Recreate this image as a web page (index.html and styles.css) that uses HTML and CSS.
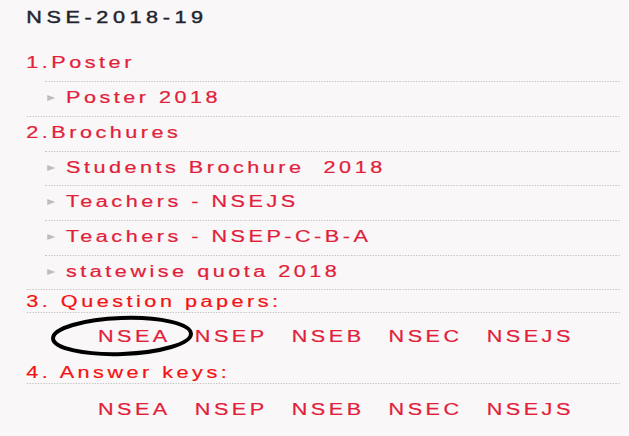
FILE: index.html
```html
<!DOCTYPE html>
<html lang="en">
<head>
<meta charset="utf-8">
<title>NSE-2018-19</title>
<link rel="stylesheet" href="styles.css">
</head>
<body>
<div class="page">
  <div class="panel">
    <h3 class="title">NSE-2018-19</h3>
    <ul class="sections">
      <li class="section">
        <a class="section-head" href="#">1.Poster</a>
        <ul class="sublist">
          <li class="subitem"><a class="link" href="#">Poster 2018</a></li>
        </ul>
      </li>
      <li class="section">
        <a class="section-head" href="#">2.Brochures</a>
        <ul class="sublist">
          <li class="subitem"><a class="link" href="#">Students Brochure&nbsp; 2018</a></li>
          <li class="subitem"><a class="link" href="#">Teachers - NSEJS</a></li>
          <li class="subitem"><a class="link" href="#">Teachers - NSEP-C-B-A</a></li>
          <li class="subitem"><a class="link" href="#">statewise quota 2018</a></li>
        </ul>
      </li>
    </ul>
    <div class="group-head">3. Question papers:</div>
    <div class="codes">
      <a class="link" href="#">NSEA</a>
      <a class="link" href="#">NSEP</a>
      <a class="link" href="#">NSEB</a>
      <a class="link" href="#">NSEC</a>
      <a class="link" href="#">NSEJS</a>
    </div>
    <div class="group-head">4. Answer keys:</div>
    <div class="codes codes-answers">
      <a class="link" href="#">NSEA</a>
      <a class="link" href="#">NSEP</a>
      <a class="link" href="#">NSEB</a>
      <a class="link" href="#">NSEC</a>
      <a class="link" href="#">NSEJS</a>
    </div>
  </div>
  <svg class="ellipse" viewBox="0 0 150 46" aria-hidden="true">
    <ellipse cx="74" cy="22" rx="69" ry="18" fill="none" stroke="#000" stroke-width="4" transform="rotate(-2 74 22)"/>
  </svg>
</div>
</body>
</html>
```

FILE: styles.css
```css
html, body {
  margin: 0;
  padding: 0;
  background: #f9f7f7;
}

.page {
  position: relative;
  width: 629px;
  height: 436px;
  overflow: hidden;
  font-family: "Liberation Sans", Arial, sans-serif;
  font-size: 16px;
  line-height: 18px;
}

.panel {
  width: 466px;
  box-sizing: border-box;
  padding: 9px 6.6px 0 19.5px;
  transform: scaleX(1.35);
  transform-origin: 0 0;
  letter-spacing: 2.6px;
  -webkit-text-stroke: 0.2px currentColor;
}

.title {
  margin: 0 0 20px;
  font-size: 16px;
  line-height: 18px;
  font-weight: normal;
  color: #1f2430;
  letter-spacing: 3.4px;
  -webkit-text-stroke: 0.4px currentColor;
}

.sections {
  list-style: none;
  margin: 0;
  padding: 0;
}

.section {
  padding-top: 7px;
  border-bottom: 1px dotted #c4c4c4;
}

.section-head {
  display: block;
  color: #e2203a;
  text-decoration: none;
  margin-bottom: 9px;
}

.sublist {
  list-style: none;
  margin: 0 0 0 13.5px;
  padding: 0;
}

.subitem {
  border-top: 1px dotted #c4c4c4;
  padding: 7px 0 8.7px 1.5px;
}

.subitem::before {
  content: "";
  display: inline-block;
  border-left: 6px solid #bdbdbd;
  border-top: 3.5px solid transparent;
  border-bottom: 3.5px solid transparent;
  margin-right: 8.4px;
  vertical-align: 2px;
}

.link {
  color: #e2203a;
  text-decoration: none;
}

.group-head {
  padding: 3px 0 1px;
  border-bottom: 1px dotted #c4c4c4;
  color: #f51212;
}

.codes {
  display: flex;
  gap: 17.8px;
  padding: 15px 0 15px 53px;
}

.codes-answers {
  padding-top: 17px;
}

.ellipse {
  position: absolute;
  left: 48px;
  top: 314px;
  width: 150px;
  height: 46px;
}
```
